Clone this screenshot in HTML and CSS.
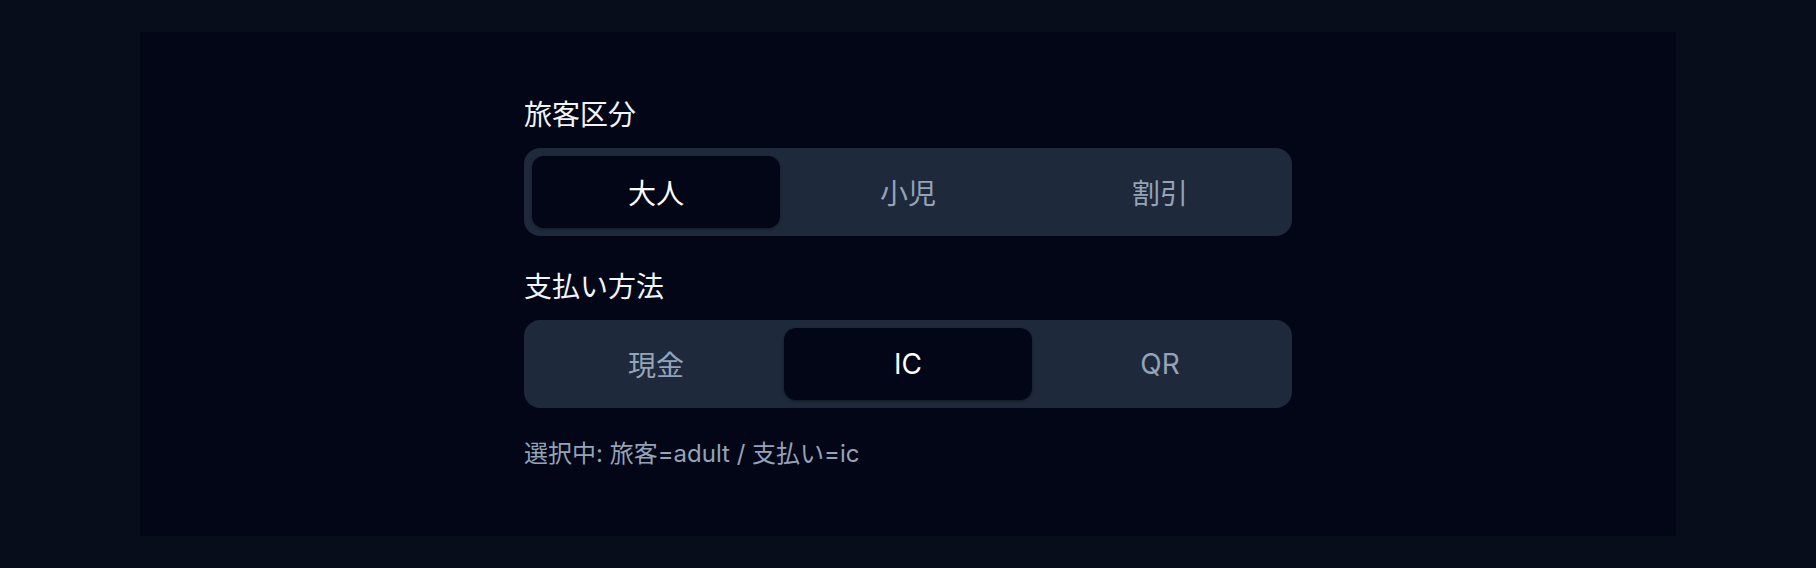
FILE: index.html
```html
<!DOCTYPE html>
<html lang="ja">

<head>
    <meta charset="UTF-8">
    <meta name="viewport" content="width=device-width, initial-scale=1.0">
    <title>乗車券の選択</title>
    <link rel="stylesheet" href="styles.css">
</head>

<body>
    <div class="page">
        <div class="panel">
            <div class="form">
                <div class="field">
                    <div class="field-label">旅客区分</div>
                    <div class="segmented" id="passenger">
                        <button class="seg-btn is-active" data-value="adult">大人</button>
                        <button class="seg-btn" data-value="child">小児</button>
                        <button class="seg-btn" data-value="discount">割引</button>
                    </div>
                </div>
                <div class="field">
                    <div class="field-label">支払い方法</div>
                    <div class="segmented" id="payment">
                        <button class="seg-btn" data-value="cash">現金</button>
                        <button class="seg-btn is-active" data-value="ic">IC</button>
                        <button class="seg-btn" data-value="qr">QR</button>
                    </div>
                </div>
                <div class="summary" id="summary">選択中: 旅客=adult / 支払い=ic</div>
            </div>
        </div>
    </div>
    <script>
        const state = { passenger: "adult", payment: "ic" };

        const render = () => {
            document.getElementById("summary").textContent =
                `選択中: 旅客=${state.passenger} / 支払い=${state.payment}`;
        };

        document.querySelectorAll(".segmented").forEach(function (group) {
            group.addEventListener("click", function (e) {
                const btn = e.target.closest(".seg-btn");
                if (!btn) {
                    return;
                }
                group.querySelectorAll(".seg-btn").forEach(b => b.classList.remove("is-active"));
                btn.classList.add("is-active");
                state[group.id] = btn.dataset.value;
                render();
            });
        });
    </script>
</body>

</html>
```

FILE: styles.css
```css
body {
    margin: 0;
    background-color: #080d1c;
    font-family: Inter, "Noto Sans CJK JP", sans-serif;
    line-height: 1.5;
}

.page {
    padding: 32px 140px;
}

.panel {
    background-color: #020617;
    height: 504px;
    box-sizing: border-box;
    padding-top: 62px;
}

.form {
    width: 768px;
    margin: 0 auto;
}

.field + .field {
    margin-top: 30px;
}

.field-label {
    color: #f1f5f9;
    font-size: 28px;
    line-height: 42px;
    margin-bottom: 12px;
}

.segmented {
    display: grid;
    grid-template-columns: repeat(3, 1fr);
    gap: 4px;
    padding: 8px;
    background-color: #1e293b;
    border-radius: 16px;
}

.seg-btn {
    height: 72px;
    border: 0;
    border-radius: 12px;
    background: transparent;
    color: #94a3b8;
    font-family: inherit;
    font-size: 28px;
    cursor: pointer;
}

.seg-btn.is-active {
    background-color: #020617;
    color: #ffffff;
    box-shadow: 0 1px 3px rgba(0, 0, 0, 0.4);
}

.summary {
    margin-top: 28px;
    color: #94a3b8;
    font-size: 24px;
    line-height: 36px;
}
```
